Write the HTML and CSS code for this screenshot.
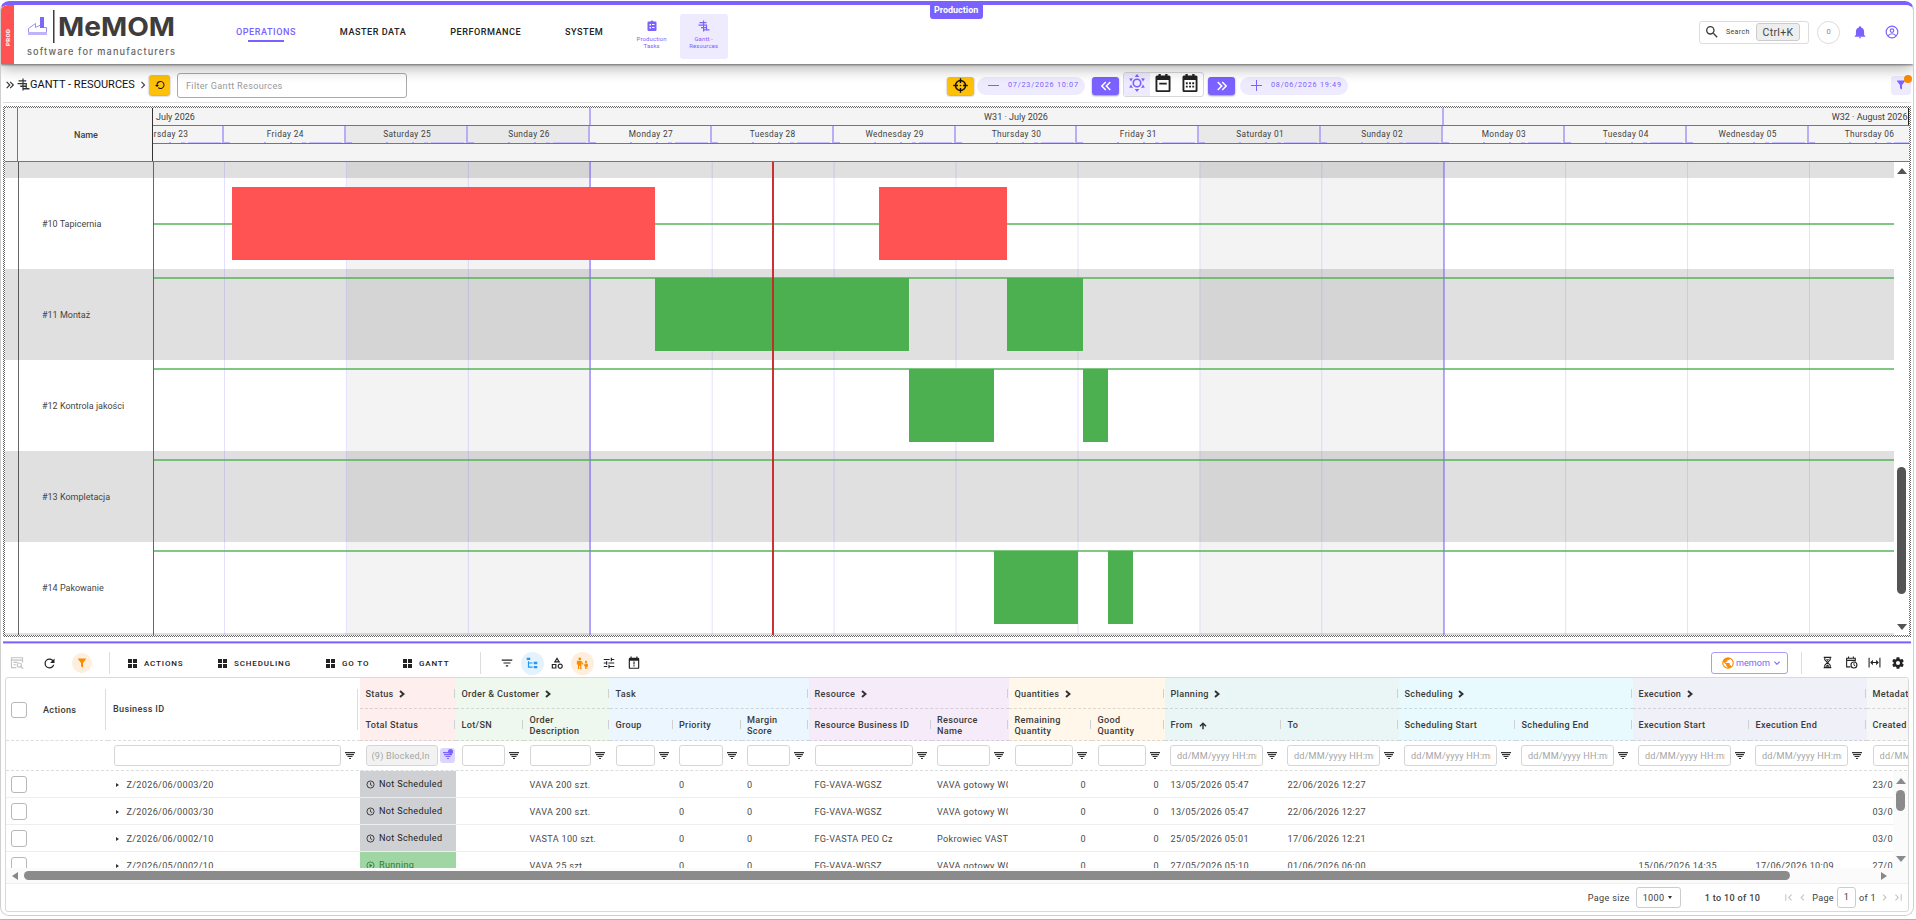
FILE: index.html
```html
<!DOCTYPE html>
<html lang="en">
<head>
<meta charset="utf-8">
<title>MeMOM - Gantt Resources</title>
<link rel="stylesheet" href="styles.css">
</head>
<body>
<svg class="sprite" aria-hidden="true">
<symbol id="i-search" viewBox="0 0 24 24"><path d="M9.5,3A6.5,6.5 0 0,1 16,9.5C16,11.11 15.41,12.59 14.44,13.73L14.71,14H15.5L20.5,19L19,20.5L14,15.5V14.71L13.73,14.44C12.59,15.41 11.11,16 9.5,16A6.5,6.5 0 0,1 3,9.5A6.5,6.5 0 0,1 9.5,3M9.5,5C7,5 5,7 5,9.5C5,12 7,14 9.5,14C12,14 14,12 14,9.5C14,7 12,5 9.5,5Z"/></symbol>
<symbol id="i-bell" viewBox="0 0 24 24"><path d="M21,19V20H3V19L5,17V11C5,7.9 7.03,5.17 10,4.29C10,4.19 10,4.1 10,4A2,2 0 0,1 12,2A2,2 0 0,1 14,4C14,4.1 14,4.19 14,4.29C16.97,5.17 19,7.9 19,11V17L21,19M14,21A2,2 0 0,1 12,23A2,2 0 0,1 10,21"/></symbol>
<symbol id="i-account" viewBox="0 0 24 24"><g fill="none" stroke="currentColor" stroke-width="2"><circle cx="12" cy="12" r="10"/><circle cx="12" cy="9.5" r="3"/><path d="M5 19C7 15.5 9.500 15 12 15S17 15.500 19 19"/></g></symbol>
<symbol id="i-refresh" viewBox="0 0 24 24"><path d="M17.65,6.35C16.2,4.9 14.21,4 12,4A8,8 0 0,0 4,12A8,8 0 0,0 12,20C15.73,20 18.84,17.45 19.73,14H17.65C16.83,16.33 14.61,18 12,18A6,6 0 0,1 6,12A6,6 0 0,1 12,6C13.66,6 15.14,6.69 16.22,7.78L13,11H20V4L17.65,6.35Z"/></symbol>
<symbol id="i-restore" viewBox="0 0 24 24"><path d="M13,4A8,8 0 0,0 5,12H2L6,16L10,12H7A6,6 0 1,1 9,16.500L7.600,18A8,8 0 1,0 13,4Z"/></symbol>
<symbol id="i-filter" viewBox="0 0 24 24"><path d="M14,12V19.88C14.04,20.18 13.94,20.5 13.71,20.71C13.32,21.1 12.69,21.1 12.3,20.71L10.29,18.7C10.06,18.47 9.96,18.16 10,17.87V12H9.97L4.21,4.62C3.87,4.19 3.95,3.56 4.38,3.22C4.57,3.08 4.78,3 5,3H19C19.22,3 19.43,3.08 19.62,3.22C20.05,3.56 20.13,4.19 19.79,4.62L14.03,12H14Z"/></symbol>
<symbol id="i-dright" viewBox="0 0 24 24"><path d="M5.59,7.41L7,6L13,12L7,18L5.59,16.59L10.17,12L5.59,7.41M11.59,7.41L13,6L19,12L13,18L11.59,16.59L16.17,12L11.59,7.41Z"/></symbol>
<symbol id="i-right" viewBox="0 0 24 24"><path d="M8.59,16.58L13.17,12L8.59,7.41L10,6L16,12L10,18L8.59,16.58Z"/></symbol>
<symbol id="i-last" viewBox="0 0 24 24"><path d="M5.59,7.41L10.18,12L5.59,16.59L7,18L13,12L7,6L5.59,7.41M16,6H18V18H16V6Z"/></symbol>
<symbol id="i-gantt" viewBox="0 0 24 24"><path d="M10 1h2.200v22H10zM3 4h14v2.600H3zM1 9h17v2.600H1zM6 14h11v2.600H6zM12 18.500h11v2.600H12zM16 9h2.200v11H16z"/></symbol>
<symbol id="i-clip" viewBox="0 0 24 24"><path fill-rule="evenodd" d="M19 3H14.800A3 3 0 0 0 9.200 3H5A2 2 0 0 0 3 5V20A2 2 0 0 0 5 22H19A2 2 0 0 0 21 20V5A2 2 0 0 0 19 3ZM7 8h3v3H7zM12 8h5v2h-5zM7 14h3v3H7zM12 14h5v2h-5z"/></symbol>
<symbol id="i-target" viewBox="0 0 24 24"><path fill="none" stroke="currentColor" stroke-width="2.300" d="M12 4A8 8 0 1 1 12 20A8 8 0 1 1 12 4ZM12 .500V8M12 16V23.500M.500 12H8M16 12H23.500"/><circle cx="12" cy="12" r="1.300"/></symbol>
<symbol id="i-sun" viewBox="0 0 24 24"><circle cx="12" cy="12" r="5" fill="none" stroke="currentColor" stroke-width="2.200"/><path d="M12 0L15 4H9ZM12 24L15 20H9ZM1.500 6L6.500 5.500L4 10ZM22.500 6L17.500 5.500L20 10ZM1.500 18L6.500 18.500L4 14ZM22.500 18L17.500 18.500L20 14Z"/></symbol>
<symbol id="i-calweek" viewBox="0 0 24 24"><path fill-rule="evenodd" d="M6 0h3v2h6V0h3v2h2a2 2 0 0 1 2 2v18a2 2 0 0 1-2 2H4a2 2 0 0 1-2-2V4a2 2 0 0 1 2-2h2zM4.500 8v13.500h15V8zM7 11.500h10v2.500H7z"/></symbol>
<symbol id="i-calmonth" viewBox="0 0 24 24"><path fill-rule="evenodd" d="M6 0h3v2h6V0h3v2h2a2 2 0 0 1 2 2v18a2 2 0 0 1-2 2H4a2 2 0 0 1-2-2V4a2 2 0 0 1 2-2h2zM4.500 8v13.500h15V8zM6.500 11h2.500v2.500H6.500zM10.800 11h2.500v2.500h-2.500zM15 11h2.500v2.500H15zM6.500 15.500h2.500V18H6.500zM10.800 15.500h2.500V18h-2.500zM15 15.500h2.500V18H15z"/></symbol>
<symbol id="i-lines" viewBox="0 0 24 24"><path d="M6,13H18V11H6M3,6V8H21V6M10,18H14V16H10V18Z"/></symbol>
<symbol id="i-tree" viewBox="0 0 24 24"><path d="M3,3H9V7H3V3M15,10H21V14H15V10M15,17H21V21H15V17M13,13H7V18H13V20H7L5,20V9H7V11H13V13Z"/></symbol>
<symbol id="i-shapes" viewBox="0 0 24 24"><path d="M11,13.5V21.5H3V13.5H11M9,15.5H5V19.5H9V15.5M12,2L17.5,11H6.5L12,2M12,5.86L10.08,9H13.92L12,5.86M17.5,13C20,13 22,15 22,17.5C22,20 20,22 17.5,22C15,22 13,20 13,17.5C13,15 15,13 17.5,13M17.5,15A2.5,2.5 0 0,0 15,17.5A2.5,2.5 0 0,0 17.5,20A2.5,2.5 0 0,0 20,17.5A2.5,2.5 0 0,0 17.5,15Z"/></symbol>
<symbol id="i-people" viewBox="0 0 24 24"><circle cx="7" cy="3.500" r="2.500"/><path d="M3 7h6.500l4.500 6-1.500 1.500L10 11.500V22H7.700v-6H6v6H3.500v-8H1.500V8.500a1.500 1.500 0 0 1 1.500-1.500z"/><circle cx="18.500" cy="9" r="2"/><path d="M14.500 15l2.500-3h3.500a1.500 1.500 0 0 1 1.500 1.500V18h-1.200v4h-1.500v-3.500h-1V22h-1.600v-5.500l-1.200.500z"/></symbol>
<symbol id="i-tune" viewBox="0 0 24 24"><path d="M3,17V19H9V17H3M3,5V7H13V5H3M13,21V19H21V17H13V15H11V21H13M7,9V11H3V13H7V15H9V9H7M21,13V11H11V13H21M15,9H17V7H21V5H17V3H15V9Z"/></symbol>
<symbol id="i-calalert" viewBox="0 0 24 24"><path fill-rule="evenodd" d="M6 1h2v2h8V1h2v2h1a2 2 0 0 1 2 2v15a2 2 0 0 1-2 2H5a2 2 0 0 1-2-2V5a2 2 0 0 1 2-2h1zM5 8v12h14V8zM11 9.500h2v5h-2zM11 16h2v2h-2z"/></symbol>
<symbol id="i-earth" viewBox="0 0 24 24"><path d="M17.9,17.39C17.64,16.59 16.89,16 16,16H15V13A1,1 0 0,0 14,12H8V10H10A1,1 0 0,0 11,9V7H13A2,2 0 0,0 15,5V4.59C17.93,5.77 20,8.64 20,12C20,14.08 19.2,15.97 17.9,17.39M11,19.93C7.05,19.44 4,16.08 4,12C4,11.38 4.08,10.78 4.21,10.21L9,15V16A2,2 0 0,0 11,18M12,2A10,10 0 0,0 2,12A10,10 0 0,0 12,22A10,10 0 0,0 22,12A10,10 0 0,0 12,2Z"/></symbol>
<symbol id="i-hour" viewBox="0 0 24 24"><path fill="none" stroke="currentColor" stroke-width="2" d="M5 2.500H19M5 21.500H19M7 3V7L12 12L7 17V21M17 3V7L12 12L17 17V21"/><path d="M9 18.500L12 15.500L15 18.500V20H9ZM9 6h6l-3 3z"/></symbol>
<symbol id="i-calclock" viewBox="0 0 24 24"><path fill="none" stroke="currentColor" stroke-width="2" d="M10 20H3V4H19V10M3 8H19M6.500 1V5M15.500 1V5"/><circle cx="16.500" cy="16.500" r="5.500" fill="none" stroke="currentColor" stroke-width="2"/><path fill="none" stroke="currentColor" stroke-width="1.600" d="M16.500 13V17L19 18"/></symbol>
<symbol id="i-fit" viewBox="0 0 24 24"><path d="M1 3h2v18H1zM21 3h2v18h-2zM4 12L9 7V11H15V7L20 12L15 17V13H9V17Z"/></symbol>
<symbol id="i-cog" viewBox="0 0 24 24"><path d="M12,15.5A3.5,3.5 0 0,1 8.5,12A3.5,3.5 0 0,1 12,8.5A3.5,3.5 0 0,1 15.5,12A3.5,3.5 0 0,1 12,15.5M19.43,12.97C19.47,12.65 19.5,12.33 19.5,12C19.5,11.67 19.47,11.34 19.43,11L21.54,9.37C21.73,9.22 21.78,8.95 21.66,8.73L19.66,5.27C19.54,5.05 19.27,4.96 19.05,5.05L16.56,6.05C16.04,5.66 15.5,5.32 14.87,5.07L14.5,2.42C14.46,2.18 14.25,2 14,2H10C9.75,2 9.54,2.18 9.5,2.42L9.13,5.07C8.5,5.32 7.96,5.66 7.44,6.05L4.95,5.05C4.73,4.96 4.46,5.05 4.34,5.27L2.34,8.73C2.21,8.95 2.27,9.22 2.46,9.37L4.57,11C4.53,11.34 4.5,11.67 4.5,12C4.5,12.33 4.53,12.65 4.57,12.97L2.46,14.63C2.27,14.78 2.21,15.05 2.34,15.27L4.34,18.73C4.46,18.95 4.73,19.03 4.95,18.95L7.44,17.94C7.96,18.34 8.5,18.68 9.13,18.93L9.5,21.58C9.54,21.82 9.75,22 10,22H14C14.25,22 14.46,21.82 14.5,21.58L14.87,18.93C15.5,18.67 16.04,18.34 16.56,17.94L19.05,18.95C19.27,19.03 19.54,18.95 19.66,18.73L21.66,15.27C21.78,15.05 21.73,14.78 21.54,14.63L19.43,12.97Z"/></symbol>
<symbol id="i-docsearch" viewBox="0 0 24 24"><path fill="none" stroke="currentColor" stroke-width="2" d="M11 20H2.500V3H21.500V11M2.500 7H21.500M6 11H13M6 15H10"/><circle cx="16" cy="15.500" r="3.500" fill="none" stroke="currentColor" stroke-width="2"/><path stroke="currentColor" stroke-width="2.200" d="M18.500 18L22.500 22"/></symbol>
<symbol id="i-grid" viewBox="0 0 18 18"><path d="M0 0h8v8H0zM10 0h8v8h-8zM0 10h8v8H0zM10 10h8v8h-8z"/></symbol>
<symbol id="i-menu" viewBox="0 0 10 7"><path d="M0 0h10v1.300H0zM1 2h8v1.200H1zM2.500 4h5v1.100h-5zM4 6h2v1H4z"/></symbol>
<symbol id="i-clock" viewBox="0 0 24 24"><path fill="none" stroke="currentColor" stroke-width="2.200" d="M12 2.500A9.500 9.500 0 1 1 12 21.500A9.500 9.500 0 1 1 12 2.500M12 6.500V12.500L16.500 15"/></symbol>
<symbol id="i-play" viewBox="0 0 24 24"><circle cx="12" cy="12" r="9.500" fill="none" stroke="currentColor" stroke-width="2.200"/><path d="M9.500 7L17 12L9.500 17Z"/></symbol>
<symbol id="i-arrowup" viewBox="0 0 24 24"><path fill="none" stroke="currentColor" stroke-width="4.500" d="M12 22V5M3 13L12 4L21 13"/></symbol>
<symbol id="i-chev" viewBox="0 0 12 16"><path fill="none" stroke="currentColor" stroke-width="4" d="M2 2L9 8L2 14"/></symbol>
</svg>
<div class="frame">
  <header class="topbar">
    <div class="env">PROD</div>
    <svg class="logo" width="152" height="54" viewBox="0 0 152 54">
      <g fill="none" stroke="#9c90f3" stroke-width="1"><path d="M2.500 29.500V23.500L9.500 18.500V22.500L15.500 19.500V22.500H20.500V29.500Z"/></g>
      <path fill="#7b68f8" d="M14 12h4v11h-4z"/><path fill="#bdb4fa" d="M2 27h19v3H2z"/>
      <path fill="#3d3d3d" d="M27 5h1.500v33H27z"/>
      <text class="logo-name" x="32" y="31" textLength="117" lengthAdjust="spacingAndGlyphs">MeMOM</text>
      <text class="logo-sub" x="1" y="50" textLength="148" lengthAdjust="spacing">software for manufacturers</text>
    </svg>
    <nav class="nav">
      <a class="nav-item active">OPERATIONS</a><a class="nav-item">MASTER DATA</a><a class="nav-item">PERFORMANCE</a><a class="nav-item">SYSTEM</a>
    </nav>
    <div class="quick"><svg class="ic s11"><use href="#i-clip"/></svg><span>Production<br>Tasks</span></div>
    <div class="quick on"><svg class="ic s11"><use href="#i-gantt"/></svg><span>Gantt -<br>Resources</span></div>
    <div class="tag">Production</div>
    <div class="top-right">
      <div class="search"><svg class="ic s16"><use href="#i-search"/></svg><span>Search</span><kbd>Ctrl+K</kbd></div>
      <div class="ring">0</div>
      <svg class="ic s14 violet bell"><use href="#i-bell"/></svg>
      <svg class="ic s14 violet"><use href="#i-account"/></svg>
    </div>
  </header>

  <div class="toolbar">
    <svg class="ic s14 dbl"><use href="#i-dright"/></svg>
    <svg class="ic gt"><use href="#i-gantt"/></svg>
    <h1>GANTT - RESOURCES</h1>
    <svg class="ic s14 crumb"><use href="#i-right"/></svg>
    <button class="btn amber reset"><svg class="ic s12"><use href="#i-restore"/></svg></button>
    <div class="field">Filter Gantt Resources</div>
    <div class="range">
      <button class="btn amber"><svg class="ic s15"><use href="#i-target"/></svg></button>
      <div class="pill"><i class="minus"></i><span>07/23/2026 10:07</span></div>
      <button class="btn solid prev"><svg class="ic s18 flip"><use href="#i-dright"/></svg></button>
      <div class="modes"><span class="on"><svg class="ic s18"><use href="#i-sun"/></svg></span><span><svg class="ic s18"><use href="#i-calweek"/></svg></span><span><svg class="ic s18"><use href="#i-calmonth"/></svg></span></div>
      <button class="btn solid"><svg class="ic s18"><use href="#i-dright"/></svg></button>
      <div class="pill plusp"><i class="minus plus"></i><span>08/06/2026 19:49</span></div>
    </div>
    <button class="fbtn"><svg class="ic s11"><use href="#i-filter"/></svg><i class="dot"></i></button>
  </div>

  <section class="gantt">
    <div class="g-head">
      <div class="g-gut"></div><div class="g-name">Name</div>
      <div class="g-scale">
        <div class="weeks"><span class="w0">July 2026</span><span class="w1">W31 · July 2026</span><span class="w2">W32 · August 2026</span></div>
        <div class="days"><span class="first">Thursday 23</span><span>Friday 24</span><span class="we">Saturday 25</span><span class="we">Sunday 26</span><span>Monday 27</span><span>Tuesday 28</span><span>Wednesday 29</span><span>Thursday 30</span><span>Friday 31</span><span class="we">Saturday 01</span><span class="we">Sunday 02</span><span>Monday 03</span><span>Tuesday 04</span><span>Wednesday 05</span><span>Thursday 06</span></div>
      </div>
    </div>
    <div class="g-body">
      <div class="g-side">
        <div class="g-lab cut odd"></div><div class="g-lab">#10 Tapicernia</div><div class="g-lab odd">#11 Montaż</div><div class="g-lab">#12 Kontrola jakości</div><div class="g-lab odd">#13 Kompletacja</div><div class="g-lab">#14 Pakowanie</div><div class="g-lab end odd"></div>
      </div>
      <div class="g-time">
        <div class="lane cut odd"></div>
        <div class="lane mid"><i class="bar red" style="left:77.500px;width:423px"></i><i class="bar red" style="left:725px;width:127.500px"></i></div>
        <div class="lane odd"><i class="bar" style="left:500.500px;width:254.500px"></i><i class="bar" style="left:852.500px;width:76px"></i></div>
        <div class="lane"><i class="bar" style="left:755px;width:84.500px"></i><i class="bar" style="left:929px;width:25px"></i></div>
        <div class="lane odd"></div>
        <div class="lane"><i class="bar" style="left:839.500px;width:84.500px"></i><i class="bar" style="left:954px;width:25px"></i></div>
        <div class="lane end odd"></div>
        <i class="shade" style="left:192.500px"></i><i class="shade" style="left:1046px"></i>
        <div class="gridlines"></div>
        <i class="wk" style="left:435px"></i><i class="wk" style="left:1288.500px"></i>
        <i class="now"></i>
      </div>
      <div class="vbar big"><i class="up"></i><i class="thumb"></i><i class="down"></i></div>
    </div>
  </section>

  <div class="splitter"></div>

  <div class="tools">
    <svg class="ic s14 dim"><use href="#i-docsearch"/></svg>
    <svg class="ic s15 rf"><use href="#i-refresh"/></svg>
    <span class="round or"><svg class="ic s11"><use href="#i-filter"/></svg></span>
    <i class="vr"></i>
    <span class="mb a"><svg class="ic s9"><use href="#i-grid"/></svg>ACTIONS</span>
    <span class="mb b"><svg class="ic s9"><use href="#i-grid"/></svg>SCHEDULING</span>
    <span class="mb c"><svg class="ic s9"><use href="#i-grid"/></svg>GO TO</span>
    <span class="mb d"><svg class="ic s9"><use href="#i-grid"/></svg>GANTT</span>
    <i class="vr"></i>
    <div class="icons">
      <span class="round"><svg class="ic s14"><use href="#i-lines"/></svg></span><span class="round bl"><svg class="ic s14"><use href="#i-tree"/></svg></span><span class="round"><svg class="ic s14"><use href="#i-shapes"/></svg></span><span class="round or"><svg class="ic s13"><use href="#i-people"/></svg></span><span class="round"><svg class="ic s14"><use href="#i-tune"/></svg></span><span class="round"><svg class="ic s14"><use href="#i-calalert"/></svg></span>
    </div>
    <div class="tenant"><svg class="ic s14 orange"><use href="#i-earth"/></svg><span>memom</span><svg class="ic s11 rot"><use href="#i-right"/></svg></div>
    <i class="vr"></i>
    <div class="rights"><span><svg class="ic s13"><use href="#i-hour"/></svg></span><span><svg class="ic s13"><use href="#i-calclock"/></svg></span><span><svg class="ic s13"><use href="#i-fit"/></svg></span><span><svg class="ic s14"><use href="#i-cog"/></svg></span></div>
  </div>

  <section class="table">
    <div class="t-head cols">
      <div class="h-act"><i class="cb"></i><b>Actions</b></div>
      <div class="h-bid"><b>Business ID</b></div>
      <div class="grp st c1"><b>Status</b><svg class="chev"><use href="#i-chev"/></svg></div>
      <div class="grp ord c2"><b>Order &amp; Customer</b><svg class="chev"><use href="#i-chev"/></svg></div>
      <div class="grp ta c3"><b>Task</b></div>
      <div class="grp re c2"><b>Resource</b><svg class="chev"><use href="#i-chev"/></svg></div>
      <div class="grp qu c2"><b>Quantities</b><svg class="chev"><use href="#i-chev"/></svg></div>
      <div class="grp pl c2"><b>Planning</b><svg class="chev"><use href="#i-chev"/></svg></div>
      <div class="grp sc c2"><b>Scheduling</b><svg class="chev"><use href="#i-chev"/></svg></div>
      <div class="grp ex c2"><b>Execution</b><svg class="chev"><use href="#i-chev"/></svg></div>
      <div class="grp me c1"><b>Metadata</b></div>
      <div class="sub st"><b>Total Status</b></div>
      <div class="sub ord"><b>Lot/SN</b></div><div class="sub ord"><b>Order<br>Description</b></div>
      <div class="sub ta"><b>Group</b></div><div class="sub ta"><b>Priority</b></div><div class="sub ta"><b>Margin<br>Score</b></div>
      <div class="sub re"><b>Resource Business ID</b></div><div class="sub re"><b>Resource<br>Name</b></div>
      <div class="sub qu"><b>Remaining<br>Quantity</b></div><div class="sub qu"><b>Good<br>Quantity</b></div>
      <div class="sub pl"><b>From</b><svg class="ic s8 ar"><use href="#i-arrowup"/></svg></div><div class="sub pl"><b>To</b></div>
      <div class="sub sc"><b>Scheduling Start</b></div><div class="sub sc"><b>Scheduling End</b></div>
      <div class="sub ex"><b>Execution Start</b></div><div class="sub ex"><b>Execution End</b></div>
      <div class="sub me"><b>Created</b></div>
    </div>
    <div class="t-filter cols">
      <div class="f0"></div>
      <div class="f"><span></span><svg class="fm"><use href="#i-menu"/></svg></div>
      <div class="f fs"><span><q>(9) Blocked,In progress</q></span><em><svg class="fm"><use href="#i-menu"/></svg></em></div>
      <div class="f"><span></span><svg class="fm"><use href="#i-menu"/></svg></div>
      <div class="f"><span></span><svg class="fm"><use href="#i-menu"/></svg></div>
      <div class="f"><span></span><svg class="fm"><use href="#i-menu"/></svg></div>
      <div class="f"><span></span><svg class="fm"><use href="#i-menu"/></svg></div>
      <div class="f"><span></span><svg class="fm"><use href="#i-menu"/></svg></div>
      <div class="f"><span></span><svg class="fm"><use href="#i-menu"/></svg></div>
      <div class="f"><span></span><svg class="fm"><use href="#i-menu"/></svg></div>
      <div class="f"><span></span><svg class="fm"><use href="#i-menu"/></svg></div>
      <div class="f"><span></span><svg class="fm"><use href="#i-menu"/></svg></div>
      <div class="f dt"><span><q>dd/MM/yyyy HH:mm</q></span><svg class="fm"><use href="#i-menu"/></svg></div>
      <div class="f dt"><span><q>dd/MM/yyyy HH:mm</q></span><svg class="fm"><use href="#i-menu"/></svg></div>
      <div class="f dt"><span><q>dd/MM/yyyy HH:mm</q></span><svg class="fm"><use href="#i-menu"/></svg></div>
      <div class="f dt"><span><q>dd/MM/yyyy HH:mm</q></span><svg class="fm"><use href="#i-menu"/></svg></div>
      <div class="f dt"><span><q>dd/MM/yyyy HH:mm</q></span><svg class="fm"><use href="#i-menu"/></svg></div>
      <div class="f dt"><span><q>dd/MM/yyyy HH:mm</q></span><svg class="fm"><use href="#i-menu"/></svg></div>
      <div class="f last"><span><q>dd/MM/yyyy HH:mm</q></span></div>
    </div>
    <div class="t-body">
      <div class="rows">
        <div class="row cols"><div><i class="cb"></i></div><div class="bid">Z/2026/06/0003/20</div><div class="status"><svg class="ic s9"><use href="#i-clock"/></svg>Not Scheduled</div><div></div><div>VAVA 200 szt.</div><div></div><div>0</div><div>0</div><div>FG-VAVA-WGSZ</div><div>VAVA gotowy WGSZ</div><div class="num">0</div><div class="num">0</div><div>13/05/2026 05:47</div><div>22/06/2026 12:27</div><div></div><div></div><div></div><div></div><div>23/06/2026</div></div>
        <div class="row cols"><div><i class="cb"></i></div><div class="bid">Z/2026/06/0003/30</div><div class="status"><svg class="ic s9"><use href="#i-clock"/></svg>Not Scheduled</div><div></div><div>VAVA 200 szt.</div><div></div><div>0</div><div>0</div><div>FG-VAVA-WGSZ</div><div>VAVA gotowy WGSZ</div><div class="num">0</div><div class="num">0</div><div>13/05/2026 05:47</div><div>22/06/2026 12:27</div><div></div><div></div><div></div><div></div><div>03/06/2026</div></div>
        <div class="row cols"><div><i class="cb"></i></div><div class="bid">Z/2026/06/0002/10</div><div class="status"><svg class="ic s9"><use href="#i-clock"/></svg>Not Scheduled</div><div></div><div>VASTA 100 szt.</div><div></div><div>0</div><div>0</div><div>FG-VASTA PEO Cz</div><div>Pokrowiec VASTA</div><div class="num">0</div><div class="num">0</div><div>25/05/2026 05:01</div><div>17/06/2026 12:21</div><div></div><div></div><div></div><div></div><div>03/06/2026</div></div>
        <div class="row cols"><div><i class="cb"></i></div><div class="bid">Z/2026/05/0002/10</div><div class="status run"><svg class="ic s9"><use href="#i-play"/></svg>Running</div><div></div><div>VAVA 25 szt.</div><div></div><div>0</div><div>0</div><div>FG-VAVA-WGSZ</div><div>VAVA gotowy WGSZ</div><div class="num">0</div><div class="num">0</div><div>27/05/2026 05:10</div><div>01/06/2026 06:00</div><div></div><div></div><div>15/06/2026 14:35</div><div>17/06/2026 10:09</div><div>27/05/2026</div></div>
      </div>
      <div class="vbar small"><i class="up"></i><i class="thumb"></i><i class="down"></i></div>
    </div>
    <div class="hbar"><i class="lt"></i><i class="thumb"></i><i class="rt"></i></div>
    <div class="pager">
      <span>Page size</span><span class="sel">1000<i></i></span><span class="cnt">1 to 10 of 10</span>
      <svg class="ic s13 dimmer flip"><use href="#i-last"/></svg><svg class="ic s13 dimmer flip p2"><use href="#i-right"/></svg>
      <span class="pg">Page</span><span class="num1">1</span><span>of 1</span>
      <svg class="ic s13 dimmer p3"><use href="#i-right"/></svg><svg class="ic s13 dimmer"><use href="#i-last"/></svg>
    </div>
  </section>
</div>
<div class="foot-line"></div>
</body>
</html>
```

FILE: styles.css
```css
* { box-sizing: border-box; }
html, body { margin: 0; height: 920px; overflow: hidden; }
body {
  background: #fff;
  font-family: Roboto, "Noto Sans", sans-serif;
  font-size: 9.1px; letter-spacing: .32px; color: #404040;
  display: flex; flex-direction: column; padding-top: 1px;
}
.sprite { position: absolute; width: 0; height: 0; }
i, em { font-style: normal; display: block; }
b { font-weight: 500; }
q { quotes: none; }
button { border: 0; padding: 0; margin: 0; font: inherit; }
svg { display: block; flex: none; }
.ic { fill: currentColor; }
.s8 { width: 8px; height: 8px; } .s9 { width: 9px; height: 9px; }
.s11 { width: 12px; height: 12px; } .s12 { width: 12px; height: 12px; } .s13 { width: 13px; height: 13px; }
.s14 { width: 14px; height: 14px; } .s15 { width: 15px; height: 15px; } .s16 { width: 16px; height: 16px; }
.s18 { width: 18px; height: 18px; }
.flip { transform: scaleX(-1); }
.rot { transform: rotate(90deg); }
.violet { color: #7b61ff; } .orange { color: #fb8c00; }

.frame {
  width: 1914px; height: 915px; border: 1px solid #cfcfcf; border-top: 4px solid #7b61ff;
  border-radius: 9px; overflow: hidden; display: flex; flex-direction: column; flex: none;
}
.foot-line { height: 1px; margin-top: 3px; background: #b9b2ac; flex: none; }

/* header */
.topbar { height: 59px; flex: none; display: flex; align-items: flex-start; background: #fff; position: relative; z-index: 3; box-shadow: 0 1px 2px rgba(0,0,0,.45), 0 4px 14px rgba(0,0,0,.32); }
.env { width: 13px; height: 59px; background: #ff5252; color: #fff; font-size: 6px; font-weight: 700; letter-spacing: .4px; writing-mode: vertical-rl; transform: rotate(180deg); display: flex; align-items: center; justify-content: center; padding-bottom: 6px; }
.logo { margin-left: 12px; }
.logo-name { font: 700 26px Inter, sans-serif; letter-spacing: 0; fill: #3d3d3d; }
.logo-sub { font: 500 9.200px Inter, sans-serif; letter-spacing: 0; fill: #666; }
.nav { display: flex; margin-left: 58px; height: 59px; }
.nav-item { margin-right: 43.900px; font-weight: 500; font-size: 9.100px; letter-spacing: .52px; color: #222; line-height: 10px; padding-top: 22px; height: 37px; position: relative; }
.nav-item.active { color: #7b61ff; }
.nav-item.active::after { content: ""; position: absolute; left: 12px; width: 36px; bottom: 0; height: 2px; background: #7b61ff; }
.quick { width: 48px; height: 45px; margin: 9px 4px 0 0; border-radius: 3px; color: #7b61ff; display: flex; flex-direction: column; align-items: center; padding-top: 6px; font-size: 6px; line-height: 7px; letter-spacing: .1px; text-align: center; }
.quick span { margin-top: 3px; }
.quick.on { background: #efebff; }
.nav + .quick { margin-left: -19.500px; }
.tag { margin-left: 198px; width: 53px; height: 14px; background: #7b61ff; color: #fff; font-weight: 700; font-size: 9px; letter-spacing: 0; line-height: 10px; border-radius: 0 0 3px 3px; text-align: center; }
.top-right { margin-left: auto; margin-right: 14px; display: flex; align-items: center; margin-top: 15.500px; height: 23px; }
.search { width: 110px; height: 23px; border: 1px solid #ddd; border-radius: 3px; display: flex; align-items: center; padding-left: 4px; font-size: 7px; letter-spacing: .35px; }
.search span { margin: -1px 5px 0 6px; width: 25px; }
kbd { width: 44px; height: 18px; background: #eee; border: 1px solid #ccc; border-radius: 3px; font: 400 10.500px/17px Roboto, sans-serif; letter-spacing: .35px; color: #444; text-align: center; margin-top: 0; }
.ring { width: 23px; height: 23px; border: 1.500px solid #dcdcdc; border-radius: 50%; margin-left: 8px; font-size: 7.500px; letter-spacing: 0; line-height: 20px; text-align: center; color: #888; }
.bell { margin: -1px 18px 0 13px; }

/* toolbar */
.toolbar { height: 39px; flex: none; margin: 0 2px; border-bottom: 1px solid #ddd; display: flex; align-items: center; position: relative; }
.dbl { color: #333; margin: 3px 0 0 0; }
.gt { margin-left: 0; width: 13px; height: 13px; margin-top: 3px; color: #333; }
h1 { margin: 3px 0 0; font-weight: 400; font-size: 11px; letter-spacing: 0; color: #111; width: 106px; white-space: nowrap; }
.crumb { margin: 3px 0 0 0; }
.btn { height: 18px; width: 27px; border-radius: 3px; display: flex; align-items: center; justify-content: center; box-shadow: 0 1px 2px rgba(0,0,0,.4); color: #111; }
.amber { background: #ffc107; }
.solid { background: #7b61ff; color: #fff; }
.reset { width: 21px; height: 20px; margin-left: -1px; margin-top: 4px; }
.field { width: 230px; height: 25px; border: 1px solid #aaa; border-radius: 3px; margin-left: 7px; margin-top: 4px; padding-left: 8px; line-height: 24px; color: #999; }
.range { display: flex; align-items: center; margin-left: 540px; margin-top: 4px; height: 25px; }
.range .btn, .pill { margin-top: 1px; }
.pill { width: 108px; height: 18px; border-radius: 9px; background: #efebff; color: #7b61ff; margin-left: 3px; display: flex; align-items: center; padding-left: 11px; font-size: 7.300px; font-weight: 400; letter-spacing: .75px; }
.pill span { margin-left: 9px; margin-top: -3px; white-space: nowrap; }
.minus { width: 11px; height: 11px; background: linear-gradient(currentColor, currentColor) center / 11px 1px no-repeat; }
.plus { background: linear-gradient(currentColor, currentColor) center / 11px 1px no-repeat, linear-gradient(currentColor, currentColor) center / 1px 11px no-repeat; }
.prev { margin-left: 7px; }
.modes { display: flex; width: 81px; height: 25px; border: 1px solid #d8d8d8; border-radius: 3px; margin: -1px 4px 0; overflow: hidden; }
.modes span { flex: 1; display: flex; justify-content: center; padding-top: 1px; color: #222; }
.modes .on { background: #efebff; color: #7b61ff; }
.plusp { margin-left: 5px; }
.fbtn { margin-left: auto; width: 20px; height: 19px; margin-top: 4px; border-radius: 3px; background: #efebff; color: #7b61ff; display: flex; align-items: center; justify-content: center; position: relative; }
.dot { position: absolute; width: 8px; height: 8px; border-radius: 50%; background: #fb8c00; right: -1px; top: -1px; }

/* gantt */
.gantt { margin: 3px 2px 0; height: 531px; flex: none; padding: 2px; background: repeating-conic-gradient(#666 0 25%, #fff 0 50%) 0 0 / 2px 2px; display: flex; flex-direction: column; }
.g-head { height: 54px; background: #f4f4f4; border-bottom: 1px solid #777; display: flex; flex: none; letter-spacing: 0; font-size: 9px; }
.g-gut { width: 13px; border-right: 1px solid #777; }
.g-name { width: 135px; border-right: 1px solid #333; display: flex; align-items: center; justify-content: center; font-weight: 500; padding-left: 2px; }
.g-scale { flex: 1; min-width: 0; overflow: hidden; }
.weeks { height: 18px; border-bottom: 1px solid #777; display: flex; line-height: 19px; white-space: nowrap; overflow: hidden; }
.w0 { width: 437.500px; padding-left: 3px; border-right: 2px solid #b8aef8; flex: none; }
.w1 { width: 853px; text-align: center; border-right: 2px solid #b8aef8; flex: none; }
.w2 { width: 465px; text-align: right; flex: none; border-right: 1px solid #222; }
.days { height: 18px; border-bottom: 1px solid #777; display: flex; overflow: hidden; font-size: 8.300px; letter-spacing: .36px; line-height: 17px; white-space: nowrap; }
.days span { width: 121.860px; padding-left: 2px; flex: none; border-right: 2px solid #b8aef8; text-align: center; background: linear-gradient(90deg, #b8aef8 6px, transparent 6px 40px, #b8aef8 40px 42px, transparent 42px 66px, #b8aef8 66px 68px, transparent 68px 78px, #c9c1fa 78px 82px, transparent 82px 85px, #c9c1fa 85px 118px, transparent 0) bottom / 100% 1px no-repeat; }
.days .first { margin-left: -50.500px; }
.days .we { background-color: #e9e9e9; }
.g-body { flex: 1; display: flex; min-height: 0; overflow: hidden; background: #fff; }
.g-side { width: 149px; flex: none; border-right: 1px solid #666; background: linear-gradient(#666, #666) 13px 0 / 1px 100% no-repeat; }
.g-lab, .lane { height: 91px; }
.g-lab { display: flex; align-items: center; padding-left: 37px; font-size: 9px; letter-spacing: 0; color: #444; }
.odd { background-color: rgba(0,0,0,.122); }
.g-lab.cut, .lane.cut { height: 16px; }
.g-lab.end, .lane.end { height: 2px; }
.g-time { flex: 1; position: relative; overflow: hidden; }
.lane { position: relative; }
.lane::before { content: ""; position: absolute; z-index: 3; left: 0; right: 0; top: 8px; height: 2px; background: rgba(76,175,80,.7); }
.lane.mid::before { top: 45px; z-index: 1; }
.lane.cut::before, .lane.end::before { display: none; }
.bar { position: absolute; z-index: 2; top: 9px; height: 73px; background: #4caf50; }
.bar.red { background: #ff5252; }
.shade { position: absolute; top: 0; bottom: 0; width: 244px; background: rgba(0,0,0,.048); }
.gridlines { position: absolute; inset: 0; background: linear-gradient(90deg, rgba(123,97,255,.2) 1.300px, transparent 1.300px) 70px 0 / 121.930px 100%; }
.wk { position: absolute; top: 0; bottom: 0; width: 2px; background: rgba(123,97,255,.5); }
.now { position: absolute; z-index: 4; left: 618px; top: 0; bottom: 0; width: 2px; background: rgba(198,40,40,.95); }
.vbar { width: 15px; flex: none; display: flex; flex-direction: column; align-items: center; color: #545454; }
.vbar .thumb { width: 9px; border-radius: 5px; background: currentColor; }
.up { border: 5px solid transparent; border-top: 0; border-bottom: 6px solid currentColor; }
.down { border: 5px solid transparent; border-bottom: 0; border-top: 6px solid currentColor; }
.big .up { margin-top: 6px; } .big .thumb { height: 127px; margin-top: 293px; } .big .down { margin-top: 30px; }
.splitter { height: 3px; margin: 4px 2px 0; flex: none; background: linear-gradient(#a99cff 0 1px, #7b61ff 1px 2px, #c9c0ff 2px); }

/* lower toolbar */
.tools { height: 33px; flex: none; display: flex; align-items: center; padding-top: 5px; color: #222; }
.dim { color: #c4c4c4; margin-left: 9px; } .rf { margin-left: 18px; }
.round { width: 23px; height: 23px; border-radius: 50%; display: flex; align-items: center; justify-content: center; }
.rf + .round { width: 20px; height: 20px; margin-left: 15px; }
.round.or { background: #feeedd; color: #fb8c00; } .round.bl { background: #e3f2fd; color: #2196f3; }
.vr { width: 1px; height: 22px; background: #ddd; margin-left: 17px; flex: none; }
.mb { display: flex; align-items: center; gap: 7px; font-size: 8px; font-weight: 500; letter-spacing: .85px; line-height: 9px; white-space: nowrap; }
.mb.a { margin-left: 18px; width: 90px; } .mb.b { width: 108px; } .mb.c { width: 77px; } .mb.d { width: 77px; }
.mb.d + .vr { margin-left: 0; }
.icons { display: flex; margin-left: 14.500px; gap: 2px; }
.icons .round:nth-child(5) { margin-left: 2px; }
.tenant { margin-left: auto; width: 77px; height: 22px; border: 1px solid #a99cff; border-radius: 3px; display: flex; align-items: center; color: #7b61ff; padding-left: 9px; }
.tenant span { width: 32px; margin: 0 3px 0 1px; font-size: 9.100px; letter-spacing: 0; }
.tenant + .vr { margin-left: 13px; }
.rights { display: flex; margin: 0 3px 0 14px; }
.rights span { width: 23.500px; display: flex; justify-content: center; }

/* table */
.table { margin: 0 4px; width: 1904px; height: 235px; flex: none; border: 1px solid #d9d9d9; border-radius: 3px; display: flex; flex-direction: column; overflow: hidden; }
.cols { display: grid; grid-template-columns: 102px 252px 96px 68px 86px 63.500px 68px 67.500px 122.500px 77.500px 83px 73px repeat(6, 117px) 60px; width: 1921px; }
.t-head { grid-template-rows: 31px 32px; flex: none; line-height: 11px; color: #3a3a3a; }
.h-act, .h-bid { grid-row: 1 / 3; display: flex; align-items: center; border-bottom: 1px dashed #ddd; background: linear-gradient(#ddd, #ddd) right 2px top 11px / 1px 41px no-repeat; padding-left: 5px; }
.cb { width: 16px; height: 16px; border: 1px solid #b8b8b8; border-radius: 3px; background: #fff; }
.h-act { padding-top: 1px; }
.h-act b { margin-left: 16px; margin-top: 1px; }
.grp, .sub { display: flex; align-items: center; padding: 2px 0 0 5.500px; border-bottom: 1px dashed rgba(0,0,0,.13); white-space: nowrap; background-image: linear-gradient(#d0d0d0, #d0d0d0); background-repeat: no-repeat; background-size: 1px 9px; background-position: right 1px center; }
.c2 { grid-column: span 2; } .c3 { grid-column: span 3; }
.st { background-color: #feeeee; } .ord { background-color: #eff8ef; } .ta { background-color: #ecf6fe; } .re { background-color: #f6ecf9; } .qu { background-color: #fff8ea; }
.pl { background-color: #eaf6f6; } .sc { background-color: #e8fafe; } .ex { background-color: #f0f0f9; } .me { background-color: #f7f7f7; }
.chev { width: 6px; height: 8px; margin-left: 5.500px; margin-top: -1px; color: #333; }
.ar { margin-left: 6px; color: #333; }
.t-filter { height: 30px; flex: none; border-bottom: 1px dashed #ddd; }
.f { display: flex; align-items: center; padding: 0 5px 0 5.500px; min-width: 0; }
.f > span { flex: 1; min-width: 0; height: 21px; border: 1px solid #d5d5d5; border-radius: 3px; padding: 0 6px; line-height: 20px; color: #a5a5a5; white-space: nowrap; display: flex; overflow: hidden; }
.f q { overflow: hidden; min-width: 0; }
.fm { width: 10px; height: 7px; margin-left: 4px; fill: #333; }
.f.dt { padding-left: 5px; }
.f.dt > span { padding: 0 5px 0 6px; letter-spacing: .2px; }
.f.dt .fm { margin-left: 4.500px; }
.fs { padding-right: 1px; }
.fs > span { background: #f2f2f2; line-height: 21px; letter-spacing: .22px; padding-left: 5px; padding-right: 5px; }
.fs em { width: 15px; height: 15px; border-radius: 3px; background: #dcd5ff; margin-left: 2px; display: flex; align-items: center; justify-content: center; position: relative; }
.fs em .fm { margin: 0; fill: #7b61ff; }
.fs em::after { content: ""; position: absolute; width: 5px; height: 5px; border-radius: 50%; background: #7b61ff; right: 2px; top: 1px; }
.t-body { height: 97px; flex: none; display: flex; overflow: hidden; }
.rows { width: 1887px; overflow: hidden; }
.row { height: 27px; border-bottom: 1px solid #eee; line-height: 29px; color: #4a4a4a; white-space: nowrap; }
.row > div { padding-left: 5.500px; overflow: hidden; margin-right: 1px; height: 26px; }
.row > div:first-child { padding: 5px 0 0 5px; }
.row .cb { height: 17px; }
.row .bid { display: flex; padding-left: 8px; }
.bid::before { content: ""; border: 2.500px solid transparent; border-left: 3.500px solid #333; border-right: 0; width: 0; height: 0; margin: 11.500px 7.500px 0 0; }
.row .status { background: #cfd0d4; display: flex; align-items: center; gap: 4.500px; color: #222; margin-right: 0; }
.row .status.run { background: #a0d6a4; color: #2e7d32; }
.row .num { text-align: right; padding-right: 5px; }
.small { color: #8b8b8b; background: #fbfbfb; }
.small .up { margin-top: 7px; } .small .thumb { height: 21px; margin-top: 6px; } .small .down { margin-top: 45px; }
.hbar { height: 16px; flex: none; background: #fbfbfb; border-bottom: 1px solid #eee; display: flex; align-items: center; color: #8b8b8b; }
.hbar .thumb { width: 1766px; height: 9px; border-radius: 5px; background: #8b8b8b; margin: 0 91px 0 6px; }
.lt { border: 4.500px solid transparent; border-left: 0; border-right: 6px solid #888; margin-left: 6px; }
.rt { border: 4.500px solid transparent; border-right: 0; border-left: 6px solid #888; }
.pager { flex: 1; display: flex; align-items: center; justify-content: flex-end; padding-right: 3px; }
.sel { width: 45px; height: 21px; border: 1px solid #ccc; border-radius: 3px; margin-left: 6px; padding-left: 6px; display: flex; align-items: center; }
.sel i { border: 2.500px solid transparent; border-bottom: 0; border-top: 3px solid #333; margin-left: 4px; }
.cnt { margin: 0 22px 0 24px; font-weight: 500; }
.dimmer { color: #c4c4c4; } .p2 { margin-left: 1px; } .p3 { margin-left: 2px; margin-right: 1px; }
.pg { margin-left: 3px; }
.num1 { width: 19px; height: 21px; border: 1px solid #ccc; border-radius: 3px; margin: 0 3px; text-align: center; line-height: 19px; }
```
